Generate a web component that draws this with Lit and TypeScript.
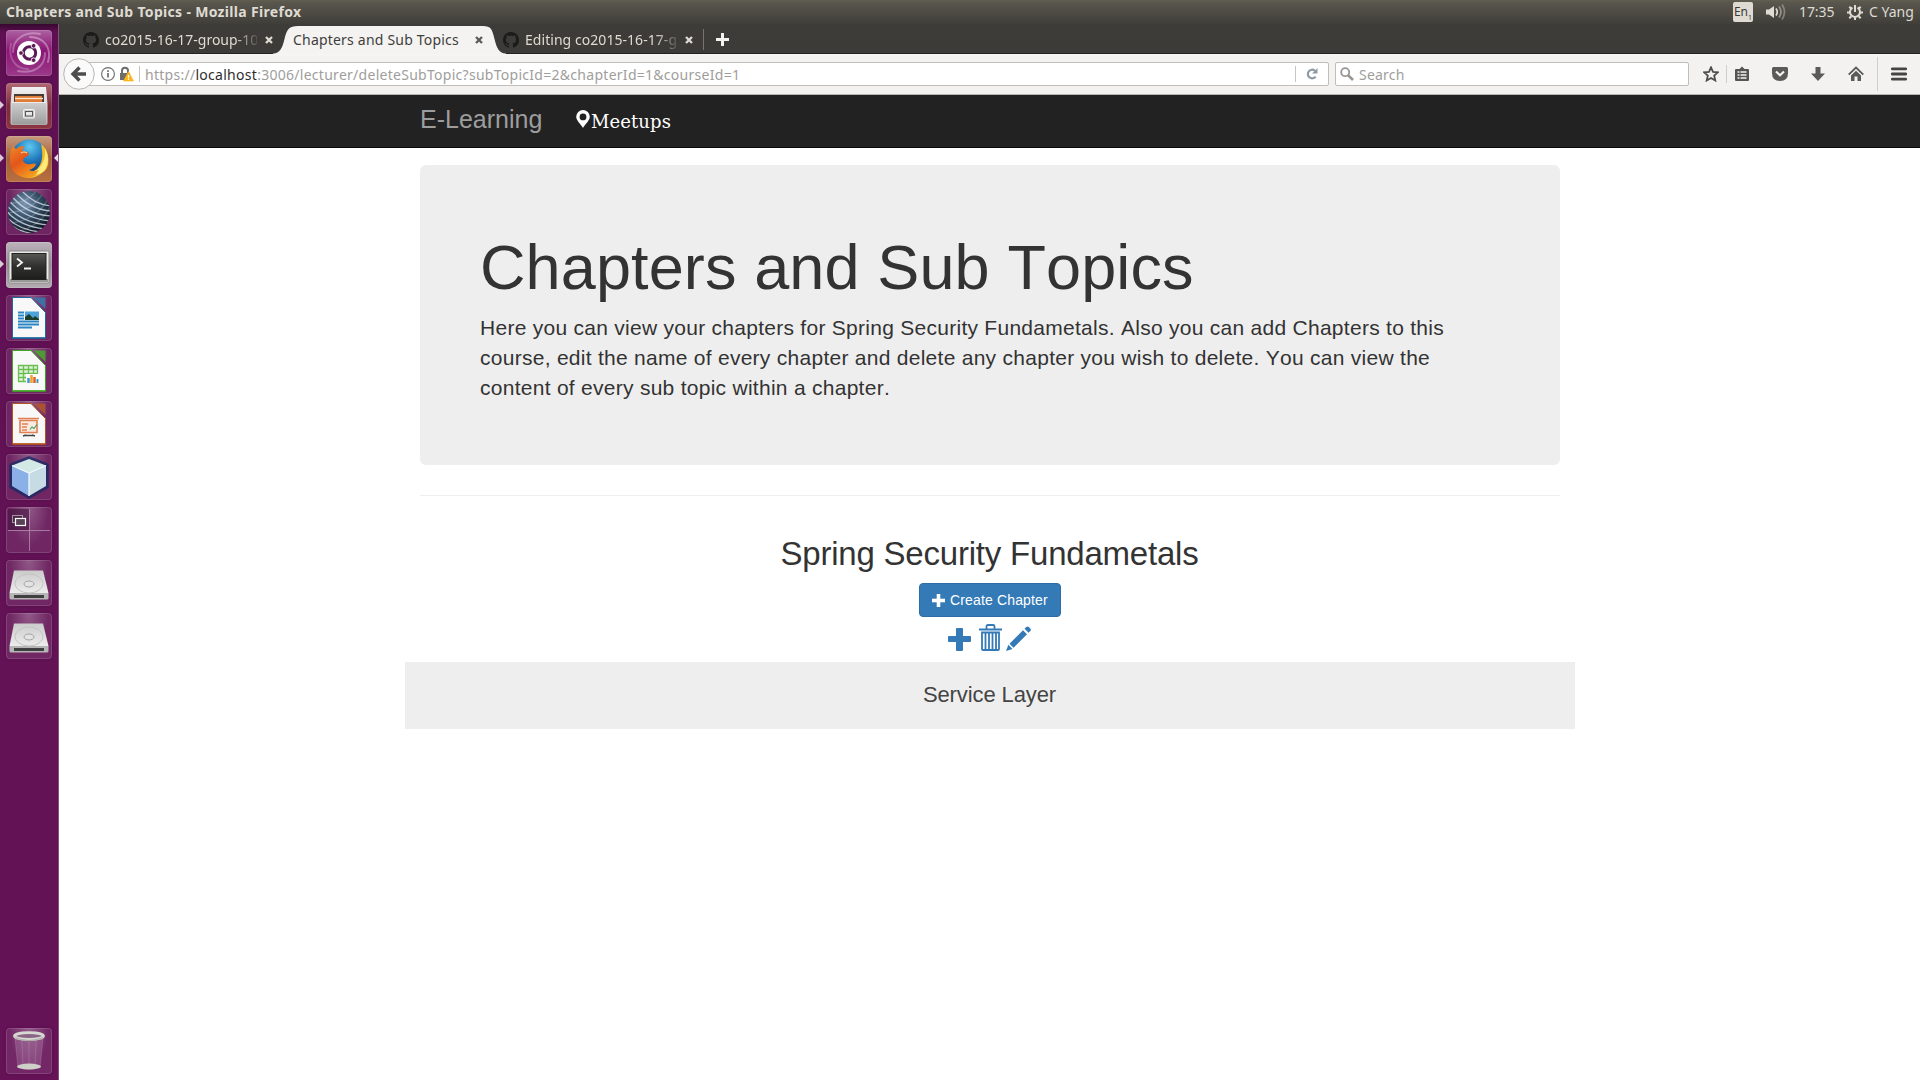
import { LitElement, html, css, svg, TemplateResult } from "lit";
import { customElement } from "lit/decorators.js";

/* ---------- launcher artwork, all on a 46x46 grid ---------- */

const ubuntu = svg`
  <g fill="none" stroke="#fff" stroke-linecap="round">
    <path d="M7 22C7 8 20 1 34 4" stroke-opacity=".3" stroke-width="2"/>
    <path d="M24 7C38 7 46 18 42 32" stroke-opacity=".35" stroke-width="2"/>
    <path d="M39 23C39 38 26 44 12 41" stroke-opacity=".3" stroke-width="2"/>
    <path d="M22 39C9 39 2 28 5 14" stroke-opacity=".22" stroke-width="2"/>
  </g>
  <circle cx="23" cy="23" r="12" fill="#fff"/>
  <circle cx="23.5" cy="23" r="6.2" fill="none" stroke="#5b1a56" stroke-width="3"/>
  <g stroke="#fff" stroke-width="1.2"><path d="M17.5 23h-4M26 18l2.500-4.500M26 28l2.500 4.500"/></g>
  <g fill="#5b1a56" stroke="#fff" stroke-width=".8">
    <circle cx="15" cy="23" r="2.300"/><circle cx="27.600" cy="15.800" r="2.300"/><circle cx="27.600" cy="30.200" r="2.300"/>
  </g>`;

const files = svg`
  <defs>
    <linearGradient id="fa" x1="0" y1="0" x2="0" y2="1"><stop offset="0" stop-color="#f2f2f2"/><stop offset="1" stop-color="#b5b5b5"/></linearGradient>
    <linearGradient id="fb" x1="0" y1="0" x2="0" y2="1"><stop offset="0" stop-color="#cfcfcf"/><stop offset="1" stop-color="#9c9c9c"/></linearGradient>
  </defs>
  <path d="M6 4h34l1.500 17v19q0 2-2 2h-33q-2 0-2-2V21Z" fill="url(#fa)"/>
  <path d="M8 11h30v9H8Z" fill="#4a3b33"/>
  <path d="M9 13h27v7H9Z" fill="#e07b35"/>
  <path d="M9 15.500h28" stroke="#fbe3cd" stroke-width="1.400"/>
  <path d="M6 19h34v21q0 1.500-1.500 1.500h-31Q6 41.500 6 40Z" fill="url(#fb)"/>
  <path d="M6 19.500h34" stroke="#eee"/>
  <rect x="17.500" y="26.500" width="11" height="8.500" rx="1" fill="#c9c9c9" stroke="#f4f4f4"/>
  <rect x="19.500" y="28.500" width="7" height="4.500" fill="#e8e8e8" stroke="#555"/>`;

const firefox = svg`
  <defs>
    <radialGradient id="ga" cx=".5" cy=".2" r=".8"><stop offset="0" stop-color="#5fc8f0"/><stop offset=".5" stop-color="#1d75b8"/><stop offset="1" stop-color="#0a2a66"/></radialGradient>
    <linearGradient id="gb" x1="0" y1="0" x2=".6" y2="1"><stop offset="0" stop-color="#f08a24"/><stop offset=".5" stop-color="#e4551b"/><stop offset="1" stop-color="#f39a1f"/></linearGradient>
  </defs>
  <circle cx="23.500" cy="22" r="18.500" fill="url(#ga)"/>
  <path d="M35 8q7 5 7.500 15T36 37q-6 5-13 5l-6-5q13 0 17-8t1-21Z" fill="#f5b92a"/>
  <path d="M39 12q1 12-5 19-5 6-12 7 10 3 17-4 6-10 0-22Z" fill="#fdea7a"/>
  <path d="M5 14 7 10l3 3q3-3 7-3l1 1-2 4 6 1 1 3-5 3-1 3q3 4 8 3 4-1 5 0-1 4-7 6 4 2 10 0-5 9-13 8Q4 39 4 24q0-5 1-10Z" fill="url(#gb)"/>
  <path d="M15 17q3-2 6 0" stroke="#fbd7a6" stroke-width="1.200" fill="none"/>`;

const globe = svg`
  <defs>
    <radialGradient id="ea" cx=".4" cy=".3" r=".75"><stop offset="0" stop-color="#7b96b5"/><stop offset=".5" stop-color="#31485f"/><stop offset="1" stop-color="#0c131d"/></radialGradient>
    <clipPath id="eb"><circle cx="23" cy="23" r="21"/></clipPath>
  </defs>
  <circle cx="23" cy="23" r="21" fill="url(#ea)"/>
  <g clip-path="url(#eb)" fill="none" stroke="#d7e2ec" stroke-width="1.300" stroke-opacity=".8">
    <path d="M14 0Q28 16 46 17M8 2Q24 21 46 22M4 5Q20 26 46 27M1 9Q17 30 45 32M-1 14Q14 34 43 36M-2 19Q11 37 39 40M-2 25Q9 40 34 43M0 31Q8 42 28 45"/>
    <path stroke-opacity=".25" d="M2 14Q20 16 32 0M2 24Q28 22 38 2M6 34Q32 30 43 8M14 42Q36 36 46 14"/>
  </g>`;

const terminal = svg`
  <defs><linearGradient id="ta" x1="0" y1="0" x2="0" y2="1"><stop offset="0" stop-color="#575754"/><stop offset=".5" stop-color="#30302e"/><stop offset="1" stop-color="#1d1d1c"/></linearGradient></defs>
  <rect x="3" y="9" width="40" height="32" rx="1.500" fill="#e9e9e7" stroke="#8d898b"/>
  <path d="M4 38.500h38" stroke="#9a9a98" stroke-width="3"/>
  <rect x="6" y="11.500" width="34" height="26" fill="url(#ta)" stroke="#222"/>
  <path d="m11 16.500 5 4-5 4M18 26.500h7" fill="none" stroke="#f4f4f4" stroke-width="1.800"/>`;

const doc = (edge: string, fold: string, body: TemplateResult) => svg`
  <path d="M6.500 2.500h18.500L39.500 17.500v25.500h-33Z" fill="#f8f8f8" stroke="${edge}"/>
  <path d="M6.500 43h33" stroke="${edge}" stroke-width="1.500"/>
  <path d="M27.500 2.500h12V14Z" fill="${fold}" fill-opacity=".8"/>
  ${body}`;

const writer = doc("#1b6a9c", "#2f7fae", svg`
  <path d="M12 17.500h6M12 20.500h6M12 23.500h6M12 26.500h21M12 29.500h21M12 32.500h14" stroke="#2a86c4" stroke-width="1.800"/>
  <rect x="19" y="16.500" width="14" height="8.500" fill="#4ba3da"/>
  <path d="M19 25v-3l4-3 4 4 2-2 4 3v1Z" fill="#1c3d2c"/>`);
const calc = doc("#3da422", "#44b326", svg`
  <path d="M12 17h20v17H12Z" fill="#dff0d8"/>
  <path d="M12 17.500h20M12 21.500h20M12 25.500h20M12 29.500h20M12 33.500h20M12.500 17v17M17.500 17v17M22.500 17v17M27.500 17v17M31.500 17v17" stroke="#6bbf52" stroke-width="1.300"/>
  <rect x="20" y="26" width="14" height="9" fill="#fff"/>
  <path d="M22.500 35v-5" stroke="#3c94d1" stroke-width="2.500"/><path d="M25.500 35v-8" stroke="#f0a12c" stroke-width="2.500"/><path d="M28.500 35v-6" stroke="#d8632c" stroke-width="2.500"/><path d="M31.500 35v-4" stroke="#3c94d1" stroke-width="2"/>`);
const impress = doc("#b4541d", "#b55a26", svg`
  <path d="M12 17.500h21M14 19.500h17v12H14Z" stroke="#e08053" fill="#fbe9df" stroke-width="1.600"/>
  <path d="M16 23h6M16 26h5M16 29h5" stroke="#e08053" stroke-width="1.500"/>
  <path d="M24 28.500 26 26l2 1.500 3-4" stroke="#3da56a" stroke-width="1.200" fill="none"/>
  <path d="M18 34.500h10M20 34l-3 1M26 34l3 1" stroke="#444" stroke-width="1.600"/>`);

const cube = svg`
  <path d="M23 4 41 11v22L23 43 5 33V11Z" fill="#152a63" stroke="#152a63" stroke-width="3.500" stroke-linejoin="round" opacity=".75"/>
  <path d="M23 5 40 11.500 23 19 6 11.500Z" fill="#d3e9e6"/>
  <path d="M6 11.500 23 19v23L6 32Z" fill="#8bb0e8"/>
  <path d="M40 11.500 23 19v23l17-10Z" fill="#c6dbe4"/>
  <path d="M23 19v23M6 11.500 23 19l17-7.500" stroke="#f3fbff" stroke-width="1.200" fill="none"/>`;

const workspaces = svg`
  <path d="M2 2h21v21H2Z" fill="#3d1038" fill-opacity=".55"/>
  <path d="M23.500 2v42M2 23.500h42" stroke="#b78bb1" stroke-opacity=".8"/>
  <rect x="6.500" y="8.500" width="10" height="7" fill="#4a2a46" stroke="#a593a3"/>
  <rect x="9.500" y="11.500" width="10" height="7" fill="#5b4158" stroke="#fff" stroke-width="1.200"/>`;

const disk = svg`
  <defs><linearGradient id="da" x1="0" y1="0" x2="0" y2="1"><stop offset="0" stop-color="#cbcbcb"/><stop offset="1" stop-color="#ececec"/></linearGradient></defs>
  <path d="M8 10.500h29l5.500 22.500h-39Z" fill="url(#da)"/>
  <path d="M3.500 33h39v5q0 1.500-1.500 1.500H5Q3.500 39.500 3.500 38Z" fill="#b5b5b5"/>
  <path d="M8 35h30v3H8Z" fill="#3f3f3f"/>
  <ellipse cx="23" cy="23.500" rx="14" ry="9.500" fill="none" stroke="#c4c4c4"/>
  <ellipse cx="23" cy="24" rx="5" ry="3" fill="#e3e3e3" stroke="#a4a4a4"/>`;

const bin = svg`
  <path d="M9 10h28l-3 30q-11 4-22 0Z" fill="#b58ab2" fill-opacity=".3"/>
  <path d="m9 10 3 30M37 10l-3 30M16 13l1 26M23 13v27M30 13l-1 26" stroke="#d9c6d8" stroke-opacity=".2"/>
  <ellipse cx="23" cy="38.500" rx="12" ry="3" fill="#cfcfc9"/>
  <ellipse cx="23" cy="8" rx="14.500" ry="3.400" fill="#8b6687" stroke="#d8d8d2" stroke-width="2.800"/>
  <path d="M8.500 9.500q14.500 6 29 0" stroke="#a9a9a3" stroke-width="1" fill="none"/>`;

interface Tile { art: TemplateResult; tone: string; running?: boolean; focused?: boolean; }

const TILES: Tile[] = [
  { art: ubuntu, tone: "dash" },
  { art: files, tone: "red", running: true },
  { art: firefox, tone: "orange", running: true, focused: true },
  { art: globe, tone: "" },
  { art: terminal, tone: "grey", running: true },
  { art: writer, tone: "" },
  { art: calc, tone: "" },
  { art: impress, tone: "" },
  { art: cube, tone: "" },
  { art: workspaces, tone: "" },
  { art: disk, tone: "" },
  { art: disk, tone: "" },
];

@customElement("unity-launcher")
export class UnityLauncher extends LitElement {
  static styles = css`
    :host { display: flex; flex-direction: column; width: 59px; box-sizing: border-box; padding: 6px 0 6px 6px;
      background: linear-gradient(#36082e, #5f1052 8px, #621255 60%, #651257); border-right: 1px solid #85507b; }
    .tiles { display: flex; flex-direction: column; gap: 7px; flex: 1; }
    .tile { position: relative; width: 46px; height: 46px; border-radius: 4px;
      background: radial-gradient(ellipse at 50% 0, rgba(255,255,255,.3), rgba(255,255,255,.09) 60%);
      box-shadow: inset 0 0 0 1px rgba(255,255,255,.13), 0 0 3px rgba(0,0,0,.15); }
    .dash { background: linear-gradient(#ad62a2, #8b1575 45%, #9a3a8a); }
    .red { background: linear-gradient(#b06a75, #7d2a3c 50%, #8d3543); }
    .orange { background: linear-gradient(#c69a7e, #a35f3a 50%, #b8703f); }
    .grey { background: linear-gradient(#bdb3bb, #968a94 50%, #b5abb2); }
    .art { display: block; width: 46px; height: 46px; }
    .run { position: absolute; left: -6px; top: 18px; border-left: 4px solid #d8cbd5; border-top: 4px solid transparent; border-bottom: 4px solid transparent; }
    .focus { position: absolute; right: -6px; top: 18px; border-right: 4px solid #e6dce4; border-top: 4px solid transparent; border-bottom: 4px solid transparent; }
  `;
  private tile(t: Tile) {
    return html`<div class="tile ${t.tone}">
      <svg class="art" viewBox="0 0 46 46">${t.art}</svg>
      ${t.running ? html`<i class="run"></i>` : ""}${t.focused ? html`<i class="focus"></i>` : ""}
    </div>`;
  }
  render() {
    return html`<div class="tiles">${TILES.map((t) => this.tile(t))}</div>${this.tile({ art: bin, tone: "" })}`;
  }
}

@customElement("top-panel")
export class TopPanel extends LitElement {
  static styles = css`
    :host { display: flex; height: 24px; align-items: center; box-sizing: border-box; padding: 0 6px; color: #dfdbd2;
      background: linear-gradient(#63604f, #5a574e 2px, #3f3e39); font: 14px/20px "Noto Sans", sans-serif; }
    .title { flex: 1; font-weight: 700; letter-spacing: .32px; white-space: nowrap; }
    .lang { width: 20px; height: 20px; margin-right: 13px; border-radius: 2px; background: #dfdbd2; color: #3c3b37;
      font-size: 12px; line-height: 20px; text-align: center; white-space: nowrap; }
    .lang sub { font-size: 7px; vertical-align: -4px; line-height: 0; }
    .snd { width: 20px; height: 18px; margin-right: 13px; }
    .time { width: 48px; white-space: nowrap; letter-spacing: -.1px; }
    .gear { width: 16px; height: 16px; margin-right: 6px; }
    .user { width: 45px; white-space: nowrap; }
  `;
  render() {
    return html`
      <span class="title">Chapters and Sub Topics - Mozilla Firefox</span>
      <span class="lang">En<sub>1</sub></span>
      <svg class="snd" viewBox="0 0 20 18"><path d="M0 6.500h3L8 3v12l-5-3.500H0Z" fill="#dfdbd2"/>
        <g fill="none" stroke="#dfdbd2" stroke-width="1.700"><path d="M10 5.500q2.500 3.500 0 7"/><path d="M13 3.500q4 5.500 0 11" opacity=".5"/><path d="M16 1.500q5 7.500 0 15" opacity=".4"/></g></svg>
      <span class="time">17:35</span>
      <svg class="gear" viewBox="0 0 16 16"><g fill="none" stroke="#dfdbd2" stroke-width="2"><path d="M5.500 3.600a5 5 0 1 0 5 0"/><path d="M8 1v7"/>
        <path d="M0 8.500h3M13 8.500h3M8 13v3M2.300 2.800l2 2M13.700 2.800l-2 2M2.300 14.200l2-2M13.700 14.200l-2-2"/></g></svg>
      <span class="user">C Yang</span>`;
  }
}

const octocat = svg`<path fill="#1b1b1a" fill-rule="evenodd" d="M8 0C3.580 0 0 3.580 0 8c0 3.540 2.290 6.530 5.470 7.590.4.070.55-.17.55-.38 0-.19-.01-.82-.01-1.490-2.010.37-2.530-.49-2.690-.94-.09-.23-.48-.94-.82-1.130-.28-.15-.68-.52-.01-.53.63-.01 1.080.58 1.230.82.72 1.210 1.870.87 2.330.66.07-.52.28-.87.51-1.070-1.780-.2-3.640-.89-3.640-3.950 0-.87.31-1.590.82-2.150-.08-.2-.36-1.020.08-2.120 0 0 .67-.21 2.200.82.64-.18 1.320-.27 2-.27s1.360.09 2 .27c1.530-1.040 2.200-.82 2.200-.82.44 1.100.16 1.920.08 2.120.51.56.82 1.270.82 2.150 0 3.070-1.870 3.750-3.650 3.950.29.25.54.73.54 1.480 0 1.070-.01 1.930-.01 2.200 0 .21.15.46.55.38A8.010 8.010 0 0 0 16 8c0-4.420-3.580-8-8-8Z"/>`;

@customElement("firefox-chrome")
export class FirefoxChrome extends LitElement {
  static styles = css`
    :host { display: block; font: 14px/20px "Noto Sans", sans-serif; }
    svg { display: block; flex: none; }
    .strip { display: flex; height: 30px; box-sizing: border-box; background: linear-gradient(#3d3c38, #3c3b37); box-shadow: inset 0 -1px #23221f; }
    .tab { display: flex; align-items: center; height: 30px; box-sizing: border-box; padding-top: 2px; color: #dfdbd2; }
    .first { padding-left: 24px; width: 214px; }
    .third { width: 200px; letter-spacing: .05px; }
    .fav { width: 16px; height: 16px; margin-right: 6px; }
    .clip { width: 152px; margin-right: 8px; overflow: hidden; white-space: nowrap; -webkit-mask-image: linear-gradient(90deg, #000 130px, transparent 156px); mask-image: linear-gradient(90deg, #000 130px, transparent 156px); }
    .x { width: 8px; height: 8px; }
    .active { display: flex; height: 30px; width: 230px; }
    .curve { width: 25px; height: 30px; }
    .right { width: 20px; overflow: visible; }
    .mid { display: flex; align-items: center; width: 185px; height: 28px; margin-top: 2px; background: #f4f3f2; color: #3f3e3a; white-space: nowrap; }
    .name { width: 182px; flex: none; margin-left: -5px; letter-spacing: .2px; }
    .plusbox { display: flex; align-items: center; border-left: 1px solid #757470; height: 21px; margin: 5px 0 0; padding-left: 12px; }
    .bar { display: flex; align-items: center; height: 41px; box-sizing: border-box; padding: 0 13px 1px 4px; background: linear-gradient(#f7f6f5, #f3f2f0 3px, #f3f2f0); border-bottom: 1px solid #b8b4ae; }
    .back { width: 32px; height: 32px; z-index: 1; }
    .url { display: flex; align-items: center; width: 1241px; height: 24px; box-sizing: border-box; border: 1px solid #c0beba; margin-left: -7px; padding-left: 12px; border-radius: 0 2px 2px 0; background: #fff; color: #a09e9c; }
    .info { width: 14px; height: 14px; }
    .lock { width: 15px; height: 16px; margin-left: 4px; }
    .vs { width: 1px; height: 16px; background: #c7c5c2; margin: 0 5px 0 5px; flex: none; }
    .addr { flex: 1; white-space: nowrap; padding-top: 2px; letter-spacing: .277px; }
    .host { color: #2f2e2c; }
    .rs { width: 1px; height: 16px; background: #c7c5c2; margin-right: 10px; }
    .reload { width: 12px; height: 12px; margin-right: 10px; }
    .search { display: flex; align-items: center; width: 354px; height: 24px; box-sizing: border-box; border: 1px solid #c0beba; border-radius: 2px; margin-left: 6px; padding-left: 4px; background: #fff; color: #a09e9c; }
    .hint { padding-top: 2px; letter-spacing: .2px; }
    .glass { width: 14px; height: 14px; margin-right: 5px; }
    .ic { width: 16px; height: 16px; margin-left: 22px; }
    .star { margin-left: 14px; }
    .sep { width: 1px; height: 18px; background: #d0cecb; margin: 0 7px 0 7px; }
    .clipb { margin-left: 0; }
    .tall { height: 34px; margin: 0 13px; }
    .menu { margin-left: 0; }
  `;
  render() {
    const x = (c: string) => html`<svg class="x" viewBox="0 0 8 8"><path d="m1 1 6 6M7 1 1 7" stroke=${c} stroke-width="2.300"/></svg>`;
    return html`
      <div class="strip">
        <div class="tab first"><svg class="fav" viewBox="0 0 16 16">${octocat}</svg><span class="clip">co2015-16-17-group-10</span>${x("#dfdbd2")}</div>
        <div class="active">
          <svg class="curve" viewBox="0 0 25 30"><path d="M0 30v-.5C7 29 9 25 11.500 15S16 2 25 2v28Z" fill="#f4f3f2"/></svg>
          <div class="mid"><span class="name">Chapters and Sub Topics</span>${x("#5c5b58")}</div>
          <svg class="curve right" viewBox="0 0 20 30"><path d="M23 30v-.5C16 29 14 25 11.500 15S8 2 0 2v28Z" fill="#f4f3f2"/></svg>
        </div>
        <div class="tab third"><svg class="fav" viewBox="0 0 16 16">${octocat}</svg><span class="clip">Editing co2015-16-17-g</span>${x("#dfdbd2")}</div>
        <div class="plusbox"><svg width="13" height="13" viewBox="0 0 13 13"><path d="M6.500 0v13M0 6.500h13" stroke="#f4f3f2" stroke-width="3"/></svg></div>
      </div>
      <div class="bar">
        <svg class="back" viewBox="0 0 32 32"><circle cx="16" cy="16" r="15.300" fill="#fbfafa" stroke="#b9b6b2"/><path d="M23 16H11M16.500 9.500 10 16l6.500 6.500" fill="none" stroke="#4c4c4c" stroke-width="3.400"/></svg>
        <div class="url">
          <svg class="info" viewBox="0 0 14 14"><circle cx="7" cy="7" r="6.400" fill="none" stroke="#6e6e6e" stroke-width="1.100"/><path d="M7 6v4.500M7 3.200v1.700" stroke="#6e6e6e" stroke-width="1.700"/></svg>
          <svg class="lock" viewBox="0 0 15 16"><path d="M3 8V4.800a3 3 0 0 1 6 0V8" fill="none" stroke="#6d6d6d" stroke-width="2"/><path d="M1 7h10v7H1Z" fill="#6d6d6d"/><path d="m9.500 5.500 5 9.500h-10Z" fill="#fcb61b" stroke="#fcb61b" stroke-width=".6"/><path d="M9.500 9v3M9.500 12.800v1.200" stroke="#fff" stroke-width="1.200"/></svg>
          <i class="vs"></i>
          <span class="addr">https://<span class="host">localhost</span>:3006/lecturer/deleteSubTopic?subTopicId=2&amp;chapterId=1&amp;courseId=1</span>
          <i class="rs"></i>
          <svg class="reload" viewBox="0 0 12 12"><path d="M9.600 8.600A4.300 4.300 0 1 1 8.800 2.600" fill="none" stroke="#8d9aa5" stroke-width="2.200"/><path d="M11.500 0v5.500H6Z" fill="#8d9aa5"/></svg>
        </div>
        <div class="search"><svg class="glass" viewBox="0 0 14 14"><circle cx="5.200" cy="5.200" r="4" fill="none" stroke="#989693" stroke-width="1.800"/><path d="m8.300 8.300 4.700 4.700" stroke="#989693" stroke-width="2.600"/></svg><span class="hint">Search</span></div>
        <svg class="ic star" viewBox="0 0 16 16"><path d="m8 1.300 2 4.500 4.900.5-3.700 3.300 1.100 4.900L8 12l-4.300 2.500 1.100-4.900L1.100 6.300 6 5.800Z" fill="none" stroke="#4e4e4e" stroke-width="1.800"/></svg>
        <i class="sep"></i>
        <svg class="ic clipb" viewBox="0 0 16 16"><path d="M2 3h3.500L8 .5 10.500 3H14q1 0 1 1v10q0 1-1 1H2q-1 0-1-1V4q0-1 1-1Z" fill="#545454"/><path d="M3.500 6h2M3.500 9h2M3.500 12h2M6.500 6h6M6.500 9h6M6.500 12h6" stroke="#f3f2f0" stroke-width="1.600"/></svg>
        <svg class="ic" viewBox="0 0 16 16"><path d="M1.500 1h13Q16 1 16 2.500V7q0 8-8 8T0 7V2.500Q0 1 1.500 1Z" fill="#5a5a5a"/><path d="M4 5.500 8 9.300l4-3.800" fill="none" stroke="#f3f2f0" stroke-width="2.200"/></svg>
        <svg class="ic" viewBox="0 0 16 16"><path d="M5.500 1h5v6.500H15L8 15 1 7.500h4.500Z" fill="#5a5a5a"/></svg>
        <svg class="ic" viewBox="0 0 16 16"><path d="m.7 8.600 7.300-7 7.300 7" fill="none" stroke="#5a5a5a" stroke-width="1.900"/><path d="M3 9.500 8 4.700l5 4.800V15H9.500v-4.500h-3V15H3Z" fill="#5a5a5a"/></svg>
        <i class="sep tall"></i>
        <svg class="ic menu" viewBox="0 0 16 16"><path d="M1.300 2.800h13.400M1.300 8h13.400M1.300 13.200h13.400" stroke="#454545" stroke-width="2.800" stroke-linecap="round"/></svg>
      </div>`;
  }
}

@customElement("chapters-page")
export class ChaptersPage extends LitElement {
  static styles = css`
    :host { display: block; background: #fff; color: #333; font: 14px/20px "Liberation Sans", Arial, sans-serif; }
    svg { display: block; flex: none; }
    .nav { display: flex; align-items: center; height: 53px; box-sizing: border-box; background: #222; border-bottom: 1px solid #080808; padding-left: 361px; }
    .brand { width: 156px; font-size: 25px; color: #9d9d9d; line-height: 30px; margin-top: -4px; white-space: nowrap; }
    .pin { width: 14px; height: 18px; margin-top: -5px; }
    .meet { font: 18px/24px "DejaVu Serif", serif; color: #fff; margin-left: 1px; margin-top: 1px; letter-spacing: .1px; }
    .wrap { width: 1140px; margin: 17px 0 0 361px; }
    .jumbo { height: 300px; box-sizing: border-box; padding: 68px 60px 0; border-radius: 6px; background: #eee; font-kerning: none; }
    h1 { margin: 0; font-weight: 400; font-size: 63px; line-height: 69px; letter-spacing: .12px; white-space: nowrap; }
    .lead { margin: 11px 0 0; font-size: 21px; line-height: 30px; letter-spacing: .272px; white-space: nowrap; }
    .rule { height: 1px; background: #eee; margin: 30px 0 40px; }
    .center { display: flex; flex-direction: column; align-items: center; width: 1170px; margin-left: 346px; }
    h2 { margin: 0 1px 0 0; font-weight: 400; font-size: 33px; line-height: 36px; letter-spacing: -.21px; white-space: nowrap; }
    .btn { display: flex; align-items: center; width: 142px; height: 34px; box-sizing: border-box; margin-top: 11px; padding-left: 12px; border: 1px solid #2e6da4; border-radius: 4px; background: #337ab7; color: #fff; letter-spacing: .15px; white-space: nowrap; }
    .bplus { width: 13px; height: 13px; margin-right: 5px; }
    .tools { display: flex; height: 27px; margin: 7px 0 11px; padding-right: 1px; color: #337ab7; }
    .band { display: flex; align-items: center; justify-content: center; width: 1170px; height: 67px; box-sizing: border-box; padding: 0 1px 2px 0; background: #eee; font-size: 22px; letter-spacing: -.1px; color: #444; }
  `;
  render() {
    return html`
      <nav class="nav">
        <span class="brand">E-Learning</span>
        <svg class="pin" viewBox="0 0 14 18"><path fill="#fff" fill-rule="evenodd" d="M7 0a6.800 6.800 0 0 1 6.800 6.800C13.800 10.500 9 14.500 7 18 5 14.500.2 10.500.2 6.800A6.800 6.800 0 0 1 7 0Zm0 3.500a3.400 3.400 0 1 0 0 6.800 3.400 3.400 0 0 0 0-6.800Z"/></svg>
        <span class="meet">Meetups</span>
      </nav>
      <div class="wrap">
        <section class="jumbo">
          <h1>Chapters and Sub Topics</h1>
          <p class="lead">Here you can view your chapters for Spring Security Fundametals. Also you can add Chapters to this<br />
            course, edit the name of every chapter and delete any chapter you wish to delete. You can view the<br />
            content of every sub topic within a chapter.</p>
        </section>
        <div class="rule"></div>
      </div>
      <div class="center">
        <h2>Spring Security Fundametals</h2>
        <div class="btn"><svg class="bplus" viewBox="0 0 13 13"><path d="M5 0h3v5h5v3H8v5H5V8H0V5h5Z" fill="#fff" stroke="#fff" stroke-width=".6" stroke-linejoin="round"/></svg>Create Chapter</div>
        <div class="tools">
          <svg width="31" height="27" viewBox="0 0 31 27"><path fill="currentColor" d="M9 4h5q1 0 1 1v7h7q1 0 1 1v4q0 1-1 1h-7v8q0 1-1 1H9q-1 0-1-1v-8H1q-1 0-1-1v-4q0-1 1-1h7V5q0-1 1-1Z"/></svg>
          <svg width="27" height="27" viewBox="0 0 27 27"><path d="M0 5.500h23" stroke="currentColor" stroke-width="2"/><path d="M7.500 5V2.500q0-1.500 1.500-1.500h5q1.500 0 1.500 1.500V5M3 8.500h17v16.500q0 1-1 1H4q-1 0-1-1ZM6.500 9v17M10 9v17M13.500 9v17M17 9v17" fill="none" stroke="currentColor" stroke-width="1.800"/></svg>
          <svg width="25" height="27" viewBox="0 0 25 27"><path fill="currentColor" d="M18.500 4.800 20.300 3q1.300-1.200 2.600 0l1.400 1.400q1.200 1.300 0 2.600L22.500 8.800ZM17 6.300l4 4L7.500 23.700l-4-4ZM2.400 20.800l4.100 4.100L0 27Z"/></svg>
        </div>
        <div class="band">Service Layer</div>
      </div>`;
  }
}

@customElement("app-root")
export class AppRoot extends LitElement {
  static styles = css`
    :host { display: flex; flex-direction: column; width: 1920px; height: 1080px; overflow: hidden; background: #fff; }
    .row { display: flex; flex: 1; min-height: 0; }
    .win { flex: 1; min-width: 0; }
  `;
  render() {
    return html`<top-panel></top-panel>
      <div class="row"><unity-launcher></unity-launcher>
        <main class="win"><firefox-chrome></firefox-chrome><chapters-page></chapters-page></main></div>`;
  }
}
